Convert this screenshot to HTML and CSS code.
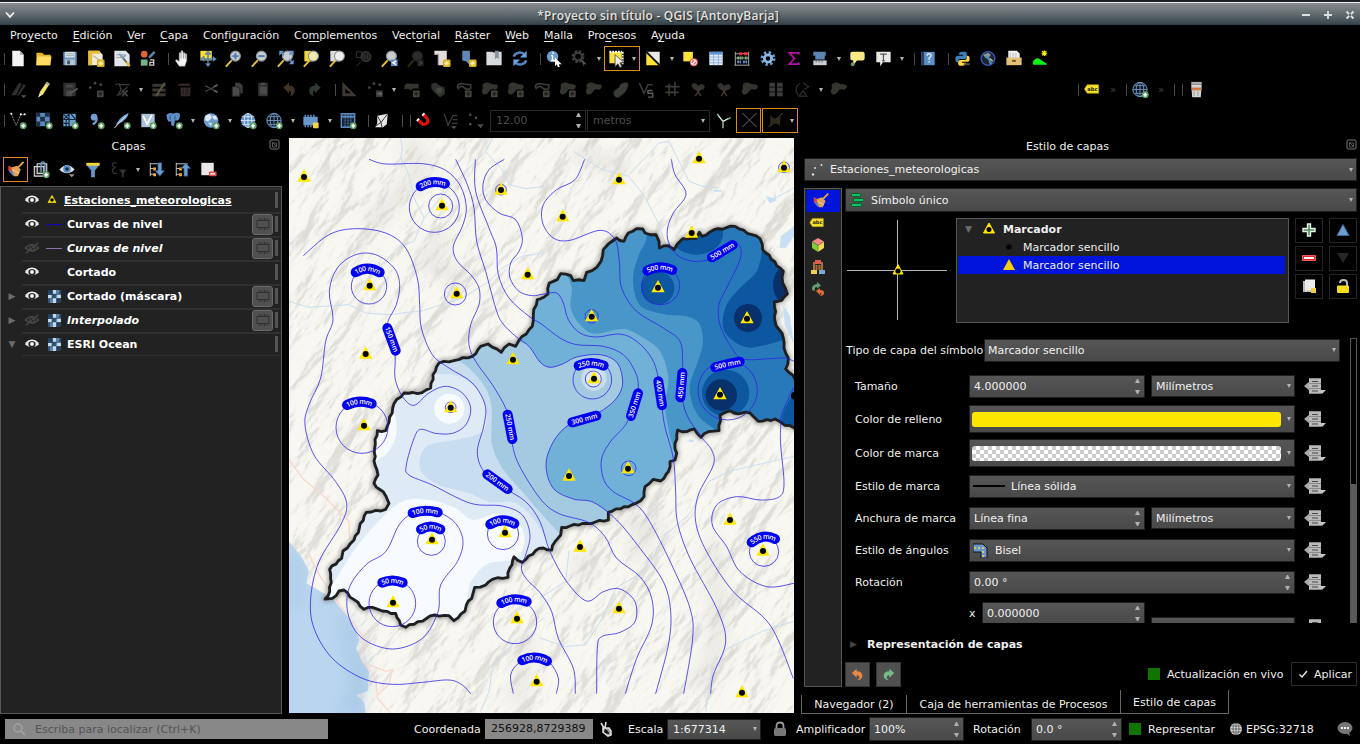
FILE: index.html
```html
<!DOCTYPE html>
<html lang="es">
<head>
<meta charset="utf-8">
<title>*Proyecto sin título - QGIS [AntonyBarja]</title>
<link rel="stylesheet" href="styles.css">
</head>
<body>
<svg class="defs" aria-hidden="true">
  <defs>
    <g id="plusbadge"><circle cx="16.500" cy="16.500" r="3.600" fill="#5b9b62"/><path d="M16.500 14.500v4M14.500 16.500h4" stroke="#fff" stroke-width="1.800"/></g>
    <g id="starbadge"><rect x="12" y="12" width="8" height="8" rx="1.500" fill="#d4af1c"/><path d="M16 13.200v5.600M13.200 16h5.600M14 14l4 4M18 14l-4 4" stroke="#fff7b8" stroke-width="1"/></g>
    <g id="glass"><path d="M3 19l5-5.500" stroke="#e8c33c" stroke-width="2" stroke-linecap="round"/><circle cx="12.500" cy="8.500" r="5.200" fill="#c9cdcf" stroke="#8d9396" stroke-width="1.200"/></g>
    <g id="blob"><path d="M3 7c2-5 7-3 9-2s6 0 7 2-2 5-4 4-4 0-5 2-5 5-7 2 2-5 0-8z" fill="#33352f"/></g>
    <g id="dimbadge"><rect x="12" y="12" width="7" height="7" rx="1" fill="#4a463c"/><path d="M15.500 13v5M13 15.500h5M13.800 13.800l3.400 3.400M17.200 13.800l-3.400 3.400" stroke="#1a1a1a" stroke-width=".800"/></g>
    <g id="globe"><circle cx="11" cy="11" r="7.500" fill="#5f8fc4"/><path d="M3.500 11h15M11 3.500v15M5 7h12M5 15h12" stroke="#dbe8f5" fill="none" stroke-width=".900"/><ellipse cx="11" cy="11" rx="4" ry="7.500" fill="none" stroke="#dbe8f5" stroke-width=".900"/></g>
  </defs>
  <symbol id="new" viewBox="0 0 22 22"><path d="M5 3h8l4 4v12H5z" fill="#f3f3f1"/><path d="M13 3v4h4z" fill="#aaa"/></symbol>
  <symbol id="open" viewBox="0 0 22 22"><path d="M3 5h6l2 2h7v11H3z" fill="#e7b52c"/><path d="M4 9h15l-2 9H3z" fill="#ffdc62"/></symbol>
  <symbol id="save" viewBox="0 0 22 22"><path d="M4 4h14v14H4z" fill="#6b95c0"/><path d="M6 4h10v6H6z" fill="#dfe3e6"/><path d="M7 6h8M7 8h8" stroke="#9aa"/><path d="M6 12h10v6H6z" fill="#b9c3cb"/><path d="M8 13h3v4H8z" fill="#40566b"/></symbol>
  <symbol id="layout" viewBox="0 0 22 22"><path d="M3 3h11l4 4v11H3z" fill="#f1ecd8"/><path d="M3 3h12v3H7v12H3z" fill="#e6bd35"/><path d="M8 8l7 5" stroke="#999"/><use href="#starbadge"/></symbol>
  <symbol id="layouts" viewBox="0 0 22 22"><path d="M3 3h12l4 4v12H3z" fill="#e4e5e6"/><path d="M5 7h8M5 10h6" stroke="#a9a9a9"/><path d="M10 8l9 11" stroke="#666" stroke-width="2"/><path d="M8 6l4 4 3-3" stroke="#8aa4bd" stroke-width="2" fill="none"/><path d="M16 15l3 4" stroke="#e3bd31" stroke-width="2.500"/></symbol>
  <symbol id="styles" viewBox="0 0 22 22"><circle cx="7" cy="6.500" r="3.500" fill="#e06436"/><path d="M12 10l6-6" stroke="#5d87b5" stroke-width="2.500"/><rect x="3.500" y="12" width="7" height="6.500" fill="#74b287"/><path d="M13 12.500h4v5.500h-4v-3h4" stroke="#ccc" stroke-width="1.400" fill="none"/></symbol>
  <symbol id="pan" viewBox="0 0 22 22"><path d="M8 19l-4-6 1-1 3 2V5h2V3h2v2h2v1h2v7l-2 6z" fill="#f4f4f4" stroke="#888" stroke-width=".500"/><path d="M10 5v6M12.500 5v6M14.500 6v5" stroke="#777" stroke-width=".700"/></symbol>
  <symbol id="pansel" viewBox="0 0 22 22"><path d="M3 3h12v10H3z" fill="#f6de3c"/><path d="M11 5v13M5 11.500h14" stroke="#4f7fb5" stroke-width="1.500"/><path d="M11 2.500l3 4H8zM11 20l3-4H8zM3 11.500l4-3v6zM20 11.500l-4-3v6z" fill="#6f9ccb" stroke="#20344b" stroke-width=".400"/></symbol>
  <symbol id="zin" viewBox="0 0 22 22"><use href="#glass"/><path d="M12.500 5.200v6.600M9.200 8.500h6.600" stroke="#4a7ab0" stroke-width="2"/></symbol>
  <symbol id="zout" viewBox="0 0 22 22"><use href="#glass"/><path d="M9.200 8.500h6.600" stroke="#4a7ab0" stroke-width="2"/></symbol>
  <symbol id="zfull" viewBox="0 0 22 22"><use href="#glass"/><path d="M5 4l4 3.500M18 4l-3.500 3M18 16l-3.500-4.500" stroke="#5f8fc4" stroke-width="1.800"/><path d="M4 3h5L4 8zM19 3h-5l5 5zM19 17v-5l-5 5z" fill="#6c99cb"/></symbol>
  <symbol id="zsel" viewBox="0 0 22 22"><path d="M3 3h9v11H3z" fill="#efd440"/><use href="#glass"/><circle cx="12.500" cy="8.500" r="4.500" fill="#efe9b0"/></symbol>
  <symbol id="zlay" viewBox="0 0 22 22"><path d="M3 3h9v11H3z" fill="#dcdcdc"/><use href="#glass"/><circle cx="12.500" cy="8.500" r="4.500" fill="#eee"/></symbol>
  <symbol id="znat" viewBox="0 0 22 22"><g fill="none" stroke="#343534"><circle cx="13" cy="9" r="5" fill="#1f201f" stroke-width="1.500"/><path d="M3 4h6v6H3zM3 19l5-5M11.500 6.500v5M14.500 6.500v5"/></g></symbol>
  <symbol id="zlast" viewBox="0 0 22 22"><use href="#glass"/><path d="M12 12h7v7h-7z" fill="#5f8fc4"/><path d="M17.500 13.500l-3.500 2 3.500 2" stroke="#fff" stroke-width="1.500" fill="none"/></symbol>
  <symbol id="znext" viewBox="0 0 22 22"><g opacity=".220"><use href="#glass"/><path d="M12 12h7v7h-7z" fill="#888"/></g><path d="M14 13.500l3.500 2-3.500 2" stroke="#555" fill="none"/></symbol>
  <symbol id="mapview" viewBox="0 0 22 22"><path d="M3 3h13v15H7V7H3z" fill="#e2ddda"/><path d="M7 6v12" stroke="#999"/><use href="#starbadge"/></symbol>
  <symbol id="bookmark" viewBox="0 0 22 22"><path d="M5 3h8v15l-4-4-4-1z" fill="#5f8ab8"/><use href="#starbadge"/></symbol>
  <symbol id="book" viewBox="0 0 22 22"><path d="M3 4h6l2 1 1-1h7v14H3z" fill="#d9dadb"/><path d="M12 3h4v9l-2-2-2 2z" fill="#8794a0"/></symbol>
  <symbol id="refresh" viewBox="0 0 22 22"><g fill="none" stroke="#4f86c0" stroke-width="2.600"><path d="M4.500 9c1-4 8-6 11.500-2M17.500 13c-1 4-8 6-11.500 2"/></g><path d="M18 3v7h-7zM4 19v-7h7z" fill="#6ca0d8"/></symbol>
  <symbol id="ident" viewBox="0 0 22 22"><circle cx="9.500" cy="9" r="6" fill="#6c9ccb"/><path d="M10 4.500v1.800M9.500 8v5M8 8h2M8 13h4" stroke="#fff" stroke-width="1.500"/><path d="M12 10l7 7-3 0 1 3-2 0-1-3-2 2z" fill="#fff"/></symbol>
  <symbol id="act" viewBox="0 0 22 22"><circle cx="9" cy="9" r="5" fill="none" stroke="#3d3d3d" stroke-width="3.500" stroke-dasharray="2.500 1.400"/><circle cx="9" cy="9" r="4" fill="none" stroke="#3d3d3d" stroke-width="2"/><path d="M12 11l6 6-3 0 0 3z" fill="#555"/></symbol>
  <symbol id="select" viewBox="0 0 22 22"><path d="M3 4h13v12H3z" fill="#f7df3e"/><path d="M3 4h13M17 4v13" stroke="#fff" stroke-dasharray="2 1" stroke-width="2"/><path d="M9 7l9 8-4 .500 2 4-2 1-2-4-3 3z" fill="#eee" stroke="#444" stroke-width=".800"/></symbol>
  <symbol id="selform" viewBox="0 0 22 22"><path d="M4 4h14v14z" fill="#e8e8e4"/><path d="M4 5v13h13z" fill="#ffe434"/><path d="M4 4l15 15" stroke="#111" stroke-width="2"/></symbol>
  <symbol id="desel" viewBox="0 0 22 22"><path d="M4 4h10v10H4z" fill="#ffe33a"/><circle cx="15" cy="15" r="4.200" fill="#eb5555"/><circle cx="15" cy="15" r="2.800" fill="none" stroke="#fff"/><path d="M13 17l4-4" stroke="#fff" stroke-width="1.400"/></symbol>
  <symbol id="table" viewBox="0 0 22 22"><path d="M4 4h14v14H4z" fill="#e5edf6"/><path d="M4 4h14v3H4z" fill="#5f95cf"/><path d="M4 9.500h14M4 12.500h14M4 15.500h14M8.500 7v11M13.500 7v11" stroke="#8fb0d6"/></symbol>
  <symbol id="abacus" viewBox="0 0 22 22"><path d="M4 4v14M18 4v14M4 6h14M4 10.500h14M3 18h16" stroke="#aaa"/><path d="M8 6h3M13 6h4" stroke="#e33" stroke-width="3"/><path d="M6 10.500h6M14 10.500h3" stroke="#7fae84" stroke-width="3" stroke-dasharray="2 .500"/><path d="M6 14.500h4M12 14.500h5" stroke="#5d8fc8" stroke-width="3" stroke-dasharray="2 .500"/></symbol>
  <symbol id="gear" viewBox="0 0 22 22"><circle cx="11" cy="11" r="6" fill="none" stroke="#6da0d6" stroke-width="3.600" stroke-dasharray="2.300 2.400"/><circle cx="11" cy="11" r="3.800" fill="none" stroke="#8ab6e4" stroke-width="3"/></symbol>
  <symbol id="sigma" viewBox="0 0 22 22"><path d="M16 7V5H6l5.500 6L6 17h10v-2" fill="none" stroke="#b313a5" stroke-width="1.800"/></symbol>
  <symbol id="ruler" viewBox="0 0 22 22"><path d="M4 4h13v4H4zM6 8h10v4H6z" fill="#5b86b4"/><path d="M4 13h14v5H4z" fill="#c8ccd0"/><path d="M7 13v2M10 13v2M13 13v2" stroke="#555"/></symbol>
  <symbol id="tip" viewBox="0 0 22 22"><path d="M6 4h11q2 0 2 2v5q0 2-2 2h-6l-4 5 0-5q-3 0-3-2V6q0-2 2-2z" fill="#f7ea86"/><circle cx="6.500" cy="17" r="2" fill="#5fa06a"/></symbol>
  <symbol id="note" viewBox="0 0 22 22"><path d="M4 4h15v11h-8l-3 4v-4H4z" fill="#e7e8ea"/><path d="M8 6.500h7M11.500 6.500v7M10 13.500h3" stroke="#555" stroke-width="1.300"/></symbol>
  <symbol id="help" viewBox="0 0 22 22"><path d="M4 4h14v14H4z" fill="#5d8fc8"/><path d="M4 4h3v14H4z" fill="#22405f"/><path d="M10 8q0-2 2.200-2t2 2q0 1.200-2 2.500v2M12.200 14v1.500" stroke="#dfeaf6" fill="none" stroke-width="1.400"/></symbol>
  <symbol id="python" viewBox="0 0 22 22"><path d="M11 4h3q2 0 2 2v4q0 1.500-2 1.500H9q-2 0-2 2V15H6q-2 0-2-4 0-3 3-3h5V7H8V6q0-2 3-2z" fill="#3d7fb7"/><path d="M11 18.500H9q-2 0-2-2v-2q0-2 2-2h5q2 0 2-2V8h1q2 0 2 3.500 0 3-3 3h-5v1h4v1q0 2-4 2z" fill="#ffd545"/><path d="M13 17h6" stroke="#555" stroke-width="2"/></symbol>
  <symbol id="earth" viewBox="0 0 22 22"><circle cx="11" cy="11" r="7.200" fill="#1a2430" stroke="#3b55b5" stroke-width="1.500"/><path d="M6 7l5-2 3 2-2 3-4 0z" fill="#8c9996"/><path d="M8 9q5 1 6 8" stroke="#4f8fb2" stroke-width="2.500" fill="none"/><path d="M13 11l3 3" stroke="#b9b58a" stroke-width="1.500"/></symbol>
  <symbol id="drawer" viewBox="0 0 22 22"><path d="M5 3h9l3 3v5H5z" fill="#f2f2f2"/><path d="M7 5v6M10 5v6M13 5v6" stroke="#b5b5b5"/><path d="M3 10h16v8H3z" fill="#e3c17a"/><path d="M9 13.500h4" stroke="#6b5420" stroke-width="2"/></symbol>
  <symbol id="hill" viewBox="0 0 22 22"><path d="M4 17v-3q4-5 8-1l6 4z" fill="#0df313" stroke="#0df313"/><path d="M12.500 5.500h6M15.500 2.500v6M13.300 3.300l4.400 4.400M17.700 3.300l-4.400 4.400" stroke="#fff400" stroke-width="1.300"/></symbol>

  <symbol id="dpens" viewBox="0 0 22 22"><path d="M4 17L12 4l3 1-6 12zM10 17l7-12 2 2-7 10z" fill="#302e2a"/><path d="M14 17h6l-3 3z" fill="#555"/></symbol>
  <symbol id="pencil" viewBox="0 0 22 22"><path d="M5 19l2-6 7-10 3 2-7 11z" fill="#f1e06a"/><path d="M14 3l3 2-1 2-3-2z" fill="#9aa"/><path d="M5 19l1.500-4 2.500 1.500z" fill="#ddd"/></symbol>
  <symbol id="dsave" viewBox="0 0 22 22"><path d="M4 4h13v14H4z" fill="#303030"/><path d="M7 6h7v3H7zM7 12h6v6H7z" fill="#4a4a4a"/><path d="M11 15l8-5" stroke="#555" stroke-width="2"/></symbol>
  <symbol id="dpts" viewBox="0 0 22 22"><circle cx="5" cy="9" r="1.500" fill="#444"/><circle cx="10" cy="4.500" r="1.500" fill="#444"/><circle cx="16" cy="6" r="1.500" fill="#444"/><use href="#dimbadge"/></symbol>
  <symbol id="dnode" viewBox="0 0 22 22"><path d="M4 6l4-1 2 6-4 7M9 6h10M8 17l9-9" stroke="#3b3a36" stroke-width="1.300" fill="none"/><path d="M11 12l6 6M17 12l-6 6" stroke="#444" stroke-width="1.800"/></symbol>
  <symbol id="dform" viewBox="0 0 22 22"><path d="M4 5h14v3H4zM4 10h14v3H4zM4 15h14v3H4z" fill="#38362f"/><path d="M8 18l9-14" stroke="#5a5642" stroke-width="2"/></symbol>
  <symbol id="dtrash" viewBox="0 0 22 22"><path d="M4 5h12v2H4zM6 9h11l-1 9H7z" fill="#392d2b"/><path d="M9 10v7M12 10v7M14 10v7" stroke="#171717"/></symbol>
  <symbol id="dcut" viewBox="0 0 22 22"><path d="M5 7l12 6M5 13l12-6" stroke="#484848" stroke-width="1.200"/><path d="M14 12l4 2M14 8l4-2" stroke="#5a5a5a" stroke-width="1.800"/></symbol>
  <symbol id="dcopy" viewBox="0 0 22 22"><path d="M9 4h5l3 3v8H9z" fill="#3c3c3c"/><path d="M6 8h5l3 2v8H6z" fill="#4b4b4b" stroke="#222"/></symbol>
  <symbol id="dpaste" viewBox="0 0 22 22"><path d="M6 4h10v14H6z" fill="#333"/><path d="M8 8h7v8H8z" fill="#4a4a4a"/><path d="M9 4h4v2H9z" fill="#555"/></symbol>
  <symbol id="dundo" viewBox="0 0 22 22"><path d="M5 9l6-5v3q6 0 6 5 0 5-5 6 2-2 1-4t-2-2v3z" fill="#3e3229"/></symbol>
  <symbol id="dredo" viewBox="0 0 22 22"><path d="M17 9l-6-5v3q-6 0-6 5 0 5 5 6-2-2-1-4t2-2v3z" fill="#303a31"/></symbol>
  <symbol id="dtri" viewBox="0 0 22 22"><path d="M4 3v15h15zM7 10v5h6z" fill="#3d3931" fill-rule="evenodd"/></symbol>
  <symbol id="dmove" viewBox="0 0 22 22"><circle cx="5" cy="9" r="1.500" fill="#444"/><circle cx="10" cy="5" r="1.500" fill="#444"/><circle cx="16" cy="6" r="1.500" fill="#444"/><path d="M12 12h7v7h-7z" fill="#3a3a3a"/><path d="M13 15.500h5M16 13.500l2 2-2 2" stroke="#777" fill="none"/></symbol>
  <symbol id="dblob1" viewBox="0 0 22 22"><path d="M3 7q2-4 6-2h9v5h-6l-2 2q-3-3-7-1z" fill="#33352f"/><use href="#dimbadge"/></symbol>
  <symbol id="dblob2" viewBox="0 0 22 22"><path d="M4 5l5-1 4 3 5 2v7l-5 3-5-4-4-5z" fill="#30332d"/><circle cx="12" cy="12" r="3" fill="#454840"/></symbol>
  <symbol id="dring" viewBox="0 0 22 22"><path d="M4 8q1-4 6-3t8 1v4q-4 2-7-1t-6 1z" fill="none" stroke="#3a3b35" stroke-width="1.700"/><use href="#dimbadge"/></symbol>
  <symbol id="dblob3" viewBox="0 0 22 22"><use href="#blob"/><use href="#dimbadge"/></symbol>
  <symbol id="dblob4" viewBox="0 0 22 22"><use href="#blob"/></symbol>
  <symbol id="dbean" viewBox="0 0 22 22"><path d="M5 17q-2-4 2-6t4-4 5-3 3 4-3 6-5 4-6-1z" fill="#3a3d36" stroke="#2a2c27"/></symbol>
  <symbol id="dvs" viewBox="0 0 22 22"><path d="M4 4l5 11 4-9h5" fill="none" stroke="#3b3b3b" stroke-width="1.600"/><path d="M18 12h-5v3h5v4h-5" fill="none" stroke="#5a5a5a" stroke-width="1.500"/></symbol>
  <symbol id="dgrid" viewBox="0 0 22 22"><path d="M8 5v13M14 3v15M4 8h15M4 14h14" stroke="#3c3c36" stroke-width="1.600"/></symbol>
  <symbol id="dsciss" viewBox="0 0 22 22"><path d="M4 6q4-4 7 1 6-4 7 1 0 4-7 4-6 0-7-6z" fill="#30322d"/><path d="M8 8l6 10M14 9L8 18" stroke="#453a38" stroke-width="1.500"/></symbol>
  <symbol id="dsquares" viewBox="0 0 22 22"><path d="M4 4h6v4H4zM12 4h6v4h-6zM4 9h6v4H4zM12 9h6v4h-6zM4 14h6v4H4zM12 14h6v4h-6z" fill="#3c3c3c"/></symbol>
  <symbol id="drot" viewBox="0 0 22 22"><path d="M9 5q-5 2-4 8l2 4M12 4l6 4-5 3M8 18l4-6 4 6z" fill="none" stroke="#303030" stroke-width="1.200"/></symbol>

  <symbol id="vadd" viewBox="0 0 22 22"><path d="M4 4l5 12 5-11h4" fill="none" stroke="#8d949a" stroke-width="1" stroke-dasharray="2 1"/><circle cx="4" cy="4" r="1.100" fill="#fff"/><circle cx="14" cy="4.500" r="1.100" fill="#fff"/><circle cx="18" cy="4.500" r="1.100" fill="#fff"/><use href="#plusbadge"/></symbol>
  <symbol id="radd" viewBox="0 0 22 22"><path d="M3 3h14v14H3z" fill="#5c89ba"/><path d="M3 3h4v4H3zM12 3h5v4h-5zM7 7h5v5H7zM3 12h4v5H3zM12 12h5v5h-5z" fill="#1c3048"/><use href="#plusbadge"/></symbol>
  <symbol id="madd" viewBox="0 0 22 22"><path d="M4 4h13v13H4z" fill="#6e9fd0"/><path d="M4 4l6 6M10 4l-6 6M12 4l5 6M10 17V4M4 10h13M4 14h6M7 10v7" stroke="#14263a" stroke-width="1.200"/><use href="#plusbadge"/></symbol>
  <symbol id="comma" viewBox="0 0 22 22"><circle cx="9" cy="7.500" r="3.500" fill="#6f9fd4"/><path d="M11.500 8q1 5-4 7" stroke="#6f9fd4" stroke-width="2.200" fill="none"/><use href="#plusbadge"/></symbol>
  <symbol id="feather" viewBox="0 0 22 22"><path d="M4 18q2-9 14-15-1 8-12 12z" fill="#78a5d4"/><path d="M3 19l12-13" stroke="#dfeaf5"/><use href="#plusbadge"/></symbol>
  <symbol id="vlay" viewBox="0 0 22 22"><path d="M4 4h14v14H4z" fill="#a9c3dd"/><path d="M6 6l4 9 5-10" stroke="#fff" stroke-width="1.800" fill="none"/><use href="#plusbadge"/></symbol>
  <symbol id="eleph" viewBox="0 0 22 22"><path d="M3 5q4-3 7-1 4-2 7 0 1 4-2 7H12l-1 6-3-1V12H5Q3 9 3 5z" fill="#5e8fc6"/><path d="M7 6v4M12 6v4" stroke="#2c4c70"/><use href="#plusbadge"/></symbol>
  <symbol id="wms" viewBox="0 0 22 22"><circle cx="11" cy="11" r="7.600" fill="#6c9bd0"/><path d="M5 6l5-2 2 4-4 4-3-1zM12 6l4 0 2 4-4 0zM8 13l4 1-1 3z" fill="#dfe9f3"/><use href="#plusbadge"/></symbol>
  <symbol id="wcs" viewBox="0 0 22 22"><use href="#globe"/><use href="#plusbadge"/></symbol>
  <symbol id="wfs" viewBox="0 0 22 22"><circle cx="11" cy="11" r="7.500" fill="#10151c" stroke="#6f9bc9"/><path d="M3.500 11h15M11 3.500v15M5 7h12M5 15h12" stroke="#6f9bc9" fill="none" stroke-width=".900"/><ellipse cx="11" cy="11" rx="4" ry="7.500" fill="none" stroke="#6f9bc9"/><use href="#plusbadge"/></symbol>
  <symbol id="chip" viewBox="0 0 22 22"><path d="M3 7h15v9H3z" fill="#6999cb"/><path d="M5 5v2M8 5v2M11 5v2M14 5v2M5 16v2M8 16v2M11 16v2" stroke="#6999cb" stroke-width="1.500"/><rect x="13" y="13" width="6" height="6" rx="1" fill="#f4d04c"/></symbol>
  <symbol id="tbadd" viewBox="0 0 22 22"><path d="M4 4h14v14H4z" fill="#16273a" stroke="#5d8bbd" stroke-width="1.500"/><path d="M4 7h14" stroke="#5d8bbd" stroke-width="2"/><path d="M8 4v14M11 4v14M14 4v14" stroke="#5d8bbd" stroke-dasharray="2 1"/><use href="#plusbadge"/></symbol>
  <symbol id="cube" viewBox="0 0 22 22"><path d="M6 6l11-2-1 11-4 3-8 0 2-4z" fill="#e8e8e8"/><path d="M6 6l4 7 7-9M4 17l6-4 1 5" stroke="#333" fill="none"/></symbol>
  <symbol id="magnet" viewBox="0 0 22 22"><g transform="rotate(-45 11 11)"><path d="M7 6v5a4 4 0 0 0 8 0V6" fill="none" stroke="#e00f0f" stroke-width="3.400"/><path d="M5.300 5h3.400v2H5.300zM13.300 5h3.400v2h-3.400z" fill="#f2f2f2"/></g></symbol>
  <symbol id="dv" viewBox="0 0 22 22"><path d="M5 4l4 12 5-10h5M14 10h5M13 14h6" fill="none" stroke="#3d3d3d" stroke-width="1.300"/><path d="M12 17h6l-3 3z" fill="#555"/></symbol>
  <symbol id="ddots" viewBox="0 0 22 22"><circle cx="5" cy="5" r="1.300" fill="#555"/><circle cx="11" cy="8" r="1.300" fill="#555"/><circle cx="5" cy="15" r="1.300" fill="#555"/><path d="M12 15h7l-3 4z" fill="#4a4a4a"/></symbol>
  <symbol id="topo" viewBox="0 0 22 22"><path d="M5 4l6 8v7M11 12l8-4" fill="none" stroke="#8cc79a" stroke-width="1.500"/><path d="M6 6l5 6 5-3" stroke="#eee" fill="none"/></symbol>
  <symbol id="cross" viewBox="0 0 22 22"><path d="M4 3l15 15M19 3L4 18" stroke="#4a4a4a" stroke-width="1.100"/></symbol>
  <symbol id="tracing" viewBox="0 0 22 22"><path d="M4 18L19 3" stroke="#555"/><path d="M6 5l3 3q3 2 6-1l2-2-1 12-2-2q-3-2-6 1l-2 2z" fill="#2f2a1c"/></symbol>
  <symbol id="abc" viewBox="0 0 22 22"><path d="M6 6h12v9H6l-3-4.500z" fill="#f5e02c" stroke="#b29a10" stroke-width=".600"/><text x="6" y="12.600" class="abc">abc</text></symbol>
  <symbol id="tidy" viewBox="0 0 22 22"><path d="M6 3h11v3H6z" fill="#aaa"/><path d="M6 6h11l-1 13H7z" fill="#d8d4d2"/><path d="M6 9h11l-.500 3H7z" fill="#b98b6b"/><path d="M7 10h8" stroke="#e0702a" stroke-width="1.300"/><path d="M9 13v5M13 13v5" stroke="#999"/></symbol>

  <symbol id="brush" viewBox="0 0 22 22"><path d="M3 7l3 1 3 6-2 2-4-4z" fill="#d8433b"/><path d="M3 12l4 5 3 1-1-5z" fill="#5b7fc4"/><path d="M6 9l6-2 4 4-3 7-4 0z" fill="#dfa155"/><path d="M13 9l6-6" stroke="#e8a33c" stroke-width="2"/><path d="M7 11l7 4" stroke="#f8d9a0"/></symbol>
  <symbol id="group" viewBox="0 0 22 22"><path d="M4 8h10v10H4zM7 5h10v10H7z" fill="#222" stroke="#d5d5d5" stroke-width="1.200"/><path d="M11 14V5q0-2 2-2t2 2v8" fill="none" stroke="#6f9bc9" stroke-width="1.500"/><use href="#plusbadge"/></symbol>
  <symbol id="eyeblue" viewBox="0 0 22 22"><path d="M3 11q8-9 16 0-8 8-16 0z" fill="#dfe3e6"/><circle cx="11" cy="10.500" r="4" fill="#5c8fc8"/><circle cx="11" cy="10.500" r="1.800" fill="#12263c"/><path d="M13 16h6l-3 3z" fill="#999"/></symbol>
  <symbol id="filter" viewBox="0 0 22 22"><path d="M4 6h14l-5 6v7h-4v-7z" fill="#6796c7"/><path d="M4 4h14v3H4z" fill="#f2d83c"/></symbol>
  <symbol id="deps" viewBox="0 0 22 22"><path d="M9 4H5L4 7l3 2-3 2 1 4h4" fill="none" stroke="#303030" stroke-width="1.400"/><path d="M11 11h8l-3 4v4h-2v-4z" fill="#333"/></symbol>
  <symbol id="expand" viewBox="0 0 22 22"><path d="M5 4v14M5 5h12M5 10h5M5 16h5" stroke="#c9c9c9" fill="none"/><path d="M8 9h3v3H8zM8 15h3v3H8z" fill="#f4a52a"/><path d="M13 4h4v8h3l-5 6-5-6h3z" fill="#6b9ccf" stroke="#25486e" stroke-width=".600"/></symbol>
  <symbol id="collapse" viewBox="0 0 22 22"><path d="M5 4v14M5 5h12M5 10h5M5 16h5" stroke="#c9c9c9" fill="none"/><path d="M8 9h3v3H8zM8 15h3v3H8z" fill="#f4a52a"/><path d="M13 18h4v-8h3l-5-6-5 6h3z" fill="#6b9ccf" stroke="#25486e" stroke-width=".600"/></symbol>
  <symbol id="remove" viewBox="0 0 22 22"><path d="M4 4h13v13H4z" fill="#e9e9e7"/><rect x="12" y="13" width="8" height="5" rx="1" fill="#e64545"/><path d="M13.500 15.500h5" stroke="#fff" stroke-width="1.500"/></symbol>
  <symbol id="eye" viewBox="0 0 16 12"><path d="M1 6.500Q8-2 15 6.500 8 12 1 6.500z" fill="#eee"/><circle cx="8" cy="6" r="3.600" fill="#222"/><circle cx="8" cy="6" r="2" fill="#eee"/><path d="M1.500 5.500Q8-1 14.500 5.500" stroke="#eee" stroke-width="1.200" fill="none"/></symbol>
  <symbol id="eyeoff" viewBox="0 0 16 12"><path d="M1.500 6Q8-1 14.500 6 8 12 1.500 6z" fill="none" stroke="#4c4c4c" stroke-width="1.200"/><circle cx="8" cy="6" r="2.500" fill="none" stroke="#4c4c4c"/><path d="M2 11L14 1" stroke="#4c4c4c" stroke-width="1.300"/></symbol>
  <symbol id="mem" viewBox="0 0 16 14"><rect x="2" y="3.500" width="12" height="7" fill="none" stroke="#303030"/><path d="M4.500 1v3M7 1v3M9.500 1v3M12 1v3M4.500 10v3M7 10v3M9.500 10v3M12 10v3" stroke="#303030"/></symbol>
  <symbol id="raster" viewBox="0 0 14 14"><path d="M0 0h14v14H0z" fill="#30506f"/><path d="M5 0h4v4H5zM0 5h4v4H0zM9 5h5v4H9zM5 9h4v5H5z" fill="#c3d9ef"/><path d="M0 0h5v5H0zM9 9h5v5H9z" fill="#273f59"/><path d="M9 0h3v4H9zM2 10h3v4H2z" fill="#6183a8"/><path d="M5 4.500h4v4H5z" fill="#31506f"/></symbol>
  <symbol id="tri" viewBox="0 0 14 14"><path d="M7 2l5.500 10h-11z" fill="#ffe800" stroke="#ffe800" stroke-linejoin="round"/><circle cx="7" cy="8.500" r="2.500" fill="#000"/></symbol>
  <symbol id="float" viewBox="0 0 12 12"><rect x="1" y="1" width="9" height="9" rx="2" fill="none" stroke="#4d4d4d" stroke-width="1.500"/><path d="M3.500 8V4h4v4zM3 3l5 5" fill="none" stroke="#555"/></symbol>
  <symbol id="ovr" viewBox="0 0 24 18"><path d="M0 9l6-5v10z" fill="#a9a9a9"/><path d="M5 1h12v16H5z" fill="#b9b9b9"/><path d="M5 1.500h12M5 6.500h12M5 11.500h12M5 16.500h12" stroke="#8a8a8a"/><path d="M8 4.500h6M8 9h6M8 14h6" stroke="#4a4a4a" stroke-width="1.200"/><path d="M14 13h8l-4 4z" fill="#c4c4c4"/></symbol>
  <symbol id="cube3" viewBox="0 0 16 16"><path d="M8 1l6 3.500-6 4-6-4z" fill="#f28b86"/><path d="M2 4.500l6 4V15l-6-4z" fill="#79d336"/><path d="M14 4.500l-6 4V15l6-4z" fill="#efdc4a"/><path d="M2 4.500l6 4 6-4M8 8.500V15" stroke="#555" stroke-width=".500" fill="none"/></symbol>
  <symbol id="diag" viewBox="0 0 16 16"><path d="M4 11V4h8v7M6.500 11V6M9.500 11V6" stroke="#a8713b" stroke-width="2" fill="none"/><path d="M5 1h6v4H5z" fill="#e25b50"/><path d="M1 11h6v4H1z" fill="#f2cd4a"/><path d="M9 11h6v4H9z" fill="#78a9dc"/></symbol>
  <symbol id="hist" viewBox="0 0 16 16"><path d="M2 9q-1-5 5-6V1l4 3.500-4 3V6Q4 6 5 10z" fill="#679b72"/><path d="M6 10l4-3v2q5 0 4 4-2 3-5 1 3 0 2-2l-1 0v2z" fill="#e06d35"/></symbol>
  <symbol id="undo" viewBox="0 0 16 16"><path d="M1 6l6-5v3q7 0 7 6-1 5-7 5 4-2 3-5-1-1-3-1v3z" fill="#e88745"/></symbol>
  <symbol id="redo" viewBox="0 0 16 16"><path d="M15 6L9 1v3Q2 4 2 10q1 5 7 5-4-2-3-5 1-1 3-1v3z" fill="#79b887"/></symbol>
</svg>

<header class="title"><svg class="tmenu" viewBox="0 0 10 8"><path d="M1 1.500L5 6l4-4.500" stroke="#eee" stroke-width="1.800" fill="#777"/></svg><h1>*Proyecto sin título - QGIS [AntonyBarja]</h1>
<svg class="wbtns" viewBox="0 0 54 12"><path d="M1 6h8M23 6h8M27 2v8" stroke="#dedede" stroke-width="1.800"/><path d="M45.500 2.500l7 7M52.500 2.500l-7 7" stroke="#dedede" stroke-width="2"/><circle cx="49" cy="6" r="1.400" fill="#667"/></svg></header>
<nav class="menu"><span>Pro<u>y</u>ecto</span><span><u>E</u>dición</span><span><u>V</u>er</span><span><u>C</u>apa</span><span>Con<u>f</u>iguración</span><span>Co<u>m</u>plementos</span><span>Vect<u>o</u>rial</span><span><u>R</u>áster</span><span><u>W</u>eb</span><span><u>M</u>alla</span><span>Pro<u>c</u>esos</span><span>A<u>y</u>uda</span></nav>
<div class="bar" data-icons="| new open save layout layouts styles / pan pansel zin zout zfull zsel zlay znat zlast znext mapview bookmark book refresh / ident act v [select] selform v desel table abacus gear sigma ruler v tip note v / help / python earth drawer hill"></div>
<div class="bar"><div class="grp" data-icons="| dpens pencil dsave dpts dnode v dform dtrash dcut dcopy dpaste dundo dredo / dtri dmove v dblob1 dblob2 dring dblob3 dblob3 dring dblob3 dblob4 dbean dvs dgrid dsciss dsciss dblob4 dsquares drot v dblob4"></div><div class="grp far" data-icons="/ abc > / wfs > / / tidy"></div></div>
<div class="bar"><div class="grp" data-icons="| vadd radd madd comma feather vlay eleph v wms v wcs wfs v chip v tbadd / cube / / magnet dv ddots"></div><div class="dimspin">12.00<i class="sp"></i></div><div class="dimcombo">metros<i class="dn"></i></div><div class="grp" data-icons="topo"></div><div class="obox"><svg class="ic"><use href="#cross"/></svg></div><div class="obox wide"><svg class="ic"><use href="#tracing"/></svg><i class="dn"></i></div></div>

<main>
<aside class="layers">
  <div class="dockt"><span>Capas</span><svg class="flt"><use href="#float"/></svg></div>
  <div class="ltools"><div class="obox"><svg class="ic"><use href="#brush"/></svg></div><div class="grp" data-icons="group eyeblue filter deps v expand collapse remove"></div></div>
  <div class="tree">
    <div class="row"><b class="ex"></b><svg class="eye"><use href="#eye"/></svg><svg class="sy"><use href="#tri"/></svg><span class="nm sel">Estaciones_meteorologicas</span><i class="bar2"></i></div>
    <div class="row"><b class="ex"></b><svg class="eye"><use href="#eye"/></svg><i class="ln"></i><span class="nm">Curvas de nivel</span><span class="chipb"><svg><use href="#mem"/></svg></span><i class="bar2"></i></div>
    <div class="row"><b class="ex"></b><svg class="eye"><use href="#eyeoff"/></svg><i class="ln mauve"></i><span class="nm it">Curvas de nivel</span><span class="chipb"><svg><use href="#mem"/></svg></span><i class="bar2"></i></div>
    <div class="row"><b class="ex"></b><svg class="eye"><use href="#eye"/></svg><i class="blank"></i><span class="nm">Cortado</span><i class="bar2"></i></div>
    <div class="row"><b class="ex">▶</b><svg class="eye"><use href="#eye"/></svg><svg class="sy ra"><use href="#raster"/></svg><span class="nm">Cortado (máscara)</span><span class="chipb"><svg><use href="#mem"/></svg></span><i class="bar2"></i></div>
    <div class="row"><b class="ex">▶</b><svg class="eye"><use href="#eyeoff"/></svg><svg class="sy ra"><use href="#raster"/></svg><span class="nm it">Interpolado</span><span class="chipb"><svg><use href="#mem"/></svg></span><i class="bar2"></i></div>
    <div class="row last"><b class="ex">▼</b><svg class="eye"><use href="#eye"/></svg><svg class="sy ra"><use href="#raster"/></svg><span class="nm">ESRI Ocean</span><i class="bar2"></i></div>
  </div>
</aside>

<svg class="map" viewBox="0 0 1515 1725" preserveAspectRatio="none">
  <defs>
    <filter id="relief" x="0" y="0" width="100%" height="100%" color-interpolation-filters="sRGB">
      <feTurbulence type="fractalNoise" baseFrequency=".0045 .011" numOctaves="5" seed="23"/>
      <feDiffuseLighting surfaceScale="34" diffuseConstant="1.150" lighting-color="#fff"><feDistantLight azimuth="250" elevation="52"/></feDiffuseLighting>
      <feComponentTransfer><feFuncR type="table" tableValues=".84 .865 .89 .955 .98"/><feFuncG type="table" tableValues=".835 .86 .885 .952 .975"/><feFuncB type="table" tableValues=".815 .84 .865 .932 .952"/></feComponentTransfer>
    </filter>
    <filter id="soft"><feGaussianBlur stdDeviation="22"/></filter>
    <filter id="shadow" x="-5%" y="-5%" width="110%" height="110%"><feGaussianBlur stdDeviation="6"/></filter>
    <clipPath id="basin"><path id="basinpath"/></clipPath>
  </defs>
  <rect width="1515" height="1725" fill="#f5f4f0"/>
  <g transform="rotate(-52 757 862)" opacity=".850"><rect x="-500" y="-350" width="2500" height="2450" filter="url(#relief)"/></g>
  <g filter="url(#soft)" fill="none" stroke="#cfcec8" stroke-opacity=".300" stroke-width="60">
    <path d="M350 0L420 110M850 40l170 60M470 280l-60 90 130 60M240 260l160-160M1000 1140l90 20-60 110M1270 1200l20 300-60 150M720 1500l-40 200M1250 940l50 40M890 1240l-20 90"/>
  </g>
  <path d="M0 1211L40 1261 60 1300 52 1336 130 1381 180 1441 212 1505 200 1531 240 1601 236 1660 200 1671 225 1691 230 1725H0z" fill="#b9d5ef"/>
  <path d="M0 1240L30 1290 20 1370 60 1395 0 1400zM150 1420L180 1441 212 1505 200 1531 240 1601 236 1660 200 1671 225 1691 230 1725H150L190 1640z" fill="#9cc0df" opacity=".550" filter="url(#soft)"/>
  <g fill="none" stroke="#cadef0" stroke-width="3">
    <path d="M335 0L340 30 335 60 360 110 375 180 405 240 375 310 330 325 290 370 250 400 220 450 180 500 230 525 300 530 400 518 520 480 600 430 640 390 700 355 765 344M0 490L60 508 180 500M405 240L480 150 550 80 590 42 640 95 660 140 710 152 765 145M590 42L610 0M853 40L940 95 1020 115 1070 180 1110 260 1130 320M1020 110L1110 15 1140 10 1200 130 1240 145 1290 150M1440 190L1515 150"/>
    <path d="M575 1720L600 1660 612 1580 680 1510 730 1465 765 1440M753 1380L830 1330 840 1240M753 1500L830 1526 890 1520 940 1440 980 1350 1050 1310 1090 1260 1130 1190 1200 1130 1260 1030 1320 1000 1515 955M1250 1720L1270 1600 1310 1535 1420 1480 1515 1450"/>
  </g>
  <path d="M1430 175l25 5 3-20 4 28-20 8M1275 155h22v6h-22zM1475 295l40-30v30l-25 35h-18M1482 500l20 30 13 90-28-60M1200 905h14v8h-14z" fill="#c9dff3"/>
  <path d="M0 965L40 1020 110 1080 180 1150 182 1205M60 1250L90 1310 130 1370 185 1445 225 1500 215 1560 260 1620 265 1680 305 1725M240 1580L290 1600 310 1595 300 1640 265 1670" fill="none" stroke="#f9d8cc" stroke-width="4"/>
  <path id="basinshadow" fill="none" stroke="#777" stroke-width="18" stroke-linejoin="round" opacity=".600" filter="url(#shadow)"/>
  <g clip-path="url(#basin)" id="bands"></g>
  <path id="basinline" fill="none" stroke="#1d1f21" stroke-width="8.500" stroke-linejoin="round"/>
  <g id="contours" fill="none" stroke="#2a20e6" stroke-opacity=".850" stroke-width="2.700"></g>
  <g id="labels"></g>
  <g id="stations"></g>
</svg>

<section class="style">
  <div class="dockt"><span>Estilo de capas</span><svg class="flt"><use href="#float"/></svg></div>
  <div class="combo big"><svg class="pts" viewBox="0 0 14 14"><circle cx="2" cy="11.500" r="1.200" fill="#ddd"/><circle cx="4" cy="5" r="1" fill="#ddd"/><circle cx="10.500" cy="2" r="1" fill="#ddd"/></svg>Estaciones_meteorologicas<i class="dn"></i></div>
  <div class="cols">
    <div class="side"><div class="s on"><svg><use href="#brush"/></svg></div><div class="s lab"><svg><use href="#abc"/></svg></div><div class="s"><svg><use href="#cube3"/></svg></div><div class="s"><svg><use href="#diag"/></svg></div><div class="s"><svg><use href="#hist"/></svg></div></div>
    <div class="main">
      <div class="combo big2"><svg class="sim" viewBox="0 0 14 14"><g fill="#0ec45f" stroke="#075b2d"><rect x=".500" y=".500" width="9" height="3" rx="1"/><rect x="2.500" y="5.500" width="10" height="3" rx="1"/><rect x=".500" y="10.500" width="10" height="3" rx="1"/></g></svg>Símbolo único<i class="dn"></i></div>
      <div class="top">
        <svg class="prev" viewBox="0 0 104 104"><path d="M52.500 2v100M2 52.500h100" stroke="#b8b8b8"/><path d="M53 46.500l5 9.500h-10z" fill="#ffe800" stroke="#ffe800"/><circle cx="53" cy="53" r="2.600"/></svg>
        <div class="symtree">
          <div class="st"><b class="ex">▼</b><svg class="tr1"><use href="#tri"/></svg><strong>Marcador</strong></div>
          <div class="st sub"><svg viewBox="0 0 14 14"><circle cx="7" cy="7" r="2.800" fill="#050505"/></svg>Marcador sencillo</div>
          <div class="st sub act"><svg viewBox="0 0 14 14"><path d="M7 1l6 11H1z" fill="#f7ce0e"/></svg>Marcador sencillo</div>
        </div>
        <div class="btns">
          <span><svg viewBox="0 0 16 16"><path d="M6.500 2h3v4.500H14v3H9.500V14h-3V9.500H2v-3h4.500z" fill="#4b9152" stroke="#e6efe7" stroke-width="1.400"/></svg></span><span><svg viewBox="0 0 16 16"><path d="M8 2.500l6 11H2z" fill="#6d9ed3" stroke="#3d6895"/></svg></span>
          <span><svg viewBox="0 0 16 16"><path d="M1.500 5.500h13v5h-13z" fill="#e02828" stroke="#ee5a5a"/><path d="M3 8h10" stroke="#fff" stroke-width="2"/></svg></span><span><svg viewBox="0 0 16 16"><path d="M2 3h12L8 13z" fill="#262626"/></svg></span>
          <span><svg viewBox="0 0 16 16"><path d="M2 3h11v11H2z" fill="#bcbcbc"/><path d="M4 1.500h10v11H4z" fill="#ececea"/><path d="M10 10h5v5h-5z" fill="#f0cd46"/></svg></span><span><svg viewBox="0 0 16 16"><path d="M5 5q0-3 3.500-3t3.500 3v3" fill="none" stroke="#bbb" stroke-width="2"/><rect x="2" y="7.500" width="12" height="7.500" rx="1" fill="#f3dd1d"/></svg></span>
        </div>
      </div>
      <div class="scroll">
        <div class="form">
          <div class="fr type"><label>Tipo de capa del símbolo</label><div class="combo grow">Marcador sencillo<i class="dn"></i></div></div>
          <div class="fr m12"><label>Tamaño</label><div class="spin v">4.000000<i class="sp"></i></div><div class="combo unit">Milímetros<i class="dn"></i></div><svg class="ovr"><use href="#ovr"/></svg></div>
          <div class="fr tall m7"><label>Color de relleno</label><div class="combo wide"><i class="sw yellow"></i><i class="dn"></i></div><svg class="ovr"><use href="#ovr"/></svg></div>
          <div class="fr tall m6"><label>Color de marca</label><div class="combo wide"><i class="sw check"></i><i class="dn"></i></div><svg class="ovr"><use href="#ovr"/></svg></div>
          <div class="fr m7"><label>Estilo de marca</label><div class="combo wide"><i class="solid"></i>Línea sólida<i class="dn"></i></div><svg class="ovr"><use href="#ovr"/></svg></div>
          <div class="fr m8"><label>Anchura de marca</label><div class="spin v">Línea fina<i class="sp"></i></div><div class="combo unit">Milímetros<i class="dn"></i></div><svg class="ovr"><use href="#ovr"/></svg></div>
          <div class="fr m8"><label>Estilo de ángulos</label><div class="combo wide"><svg class="bis" viewBox="0 0 15 15"><path d="M0 1h10l4 4v10H8V9H0z" fill="#6b95cc" stroke="#111" stroke-width="1"/><path d="M1 5h9v9" fill="none" stroke="#f2dd2f" stroke-width="1.600" stroke-dasharray="2 2"/></svg>Bisel<i class="dn"></i></div><svg class="ovr"><use href="#ovr"/></svg></div>
          <div class="fr m8"><label>Rotación</label><div class="spin wide">0.00 °<i class="sp"></i></div><svg class="ovr"><use href="#ovr"/></svg></div>
          <div class="fr m7"><label></label><em>x</em><div class="spin vx">0.000000<i class="sp"></i></div><div class="combo unit low">Milímetros<i class="dn"></i></div><svg class="ovr lowi"><use href="#ovr"/></svg></div>
        </div>
        <div class="sbar"><i></i></div>
      </div>
      <div class="rep"><b class="ex">▶</b><strong>Representación de capas</strong></div>
      <div class="acts"><span class="ab"><svg><use href="#undo"/></svg></span><span class="ab"><svg><use href="#redo"/></svg></span><i class="green"></i><span class="lv">Actualización en vivo</span><button><svg viewBox="0 0 10 10"><path d="M1.500 5.500L4 8l5-6" fill="none" stroke="#e8e8e8" stroke-width="1.400"/></svg>Aplicar</button></div>
    </div>
  </div>
  <div class="tabs"><span class="t1">Navegador (2)</span><span class="t2">Caja de herramientas de Procesos</span><span class="t3">Estilo de capas</span></div>
</section>
</main>

<footer>
  <div class="search"><svg viewBox="0 0 14 14"><circle cx="6" cy="6" r="4" fill="none" stroke="#a2a2a2" stroke-width="1.300"/><path d="M9 9l4 4" stroke="#a2a2a2" stroke-width="1.500"/></svg>Escriba para localizar (Ctrl+K)</div>
  <span class="f1">Coordenada</span><div class="coord">256928,8729389</div>
  <svg class="cur" viewBox="0 0 16 16"><path d="M3 2l3 5M8 1l-1 6M5 7l6 0 2 3v4l-3 1-5-4z" fill="#999" stroke="#ddd" stroke-width="1.600"/><path d="M7 8l3 2-1 3-3-2z" fill="#111"/><circle cx="10" cy="12" r="1" fill="#111"/></svg>
  <span class="f2">Escala</span><div class="combo sc">1:677314<i class="dn"></i></div>
  <svg class="lock" viewBox="0 0 14 16"><path d="M3.500 8V5q0-3.500 3.500-3.500T10.500 5v3" fill="none" stroke="#999" stroke-width="1.800"/><rect x="1" y="7" width="12" height="8" rx="1.500" fill="#777"/></svg>
  <span class="f3">Amplificador</span><div class="spin am">100%<i class="sp"></i></div>
  <span class="f4">Rotación</span><div class="spin ro">0.0 °<i class="sp"></i></div>
  <i class="green"></i><span class="f5">Representar</span>
  <svg class="gl" viewBox="0 0 14 14"><circle cx="7" cy="7" r="6" fill="#d9d9d9"/><path d="M1 7h12M7 1v12M2 4h10M2 10h10" stroke="#444" stroke-width=".700"/><ellipse cx="7" cy="7" rx="3" ry="6" fill="none" stroke="#444" stroke-width=".700"/></svg>
  <span class="f6">EPSG:32718</span>
  <svg class="bub" viewBox="0 0 16 16"><ellipse cx="8" cy="7" rx="7.500" ry="6" fill="#777"/><path d="M9 12l4 3-1-5z" fill="#777"/><path d="M4 7h2M7 7h2M10 7h2" stroke="#eee" stroke-width="1.800"/></svg>
</footer>
<script src="app.js"></script>
</body>
</html>
```

FILE: styles.css
```css
* { box-sizing: border-box; }
body { margin: 0; width: 1360px; height: 744px; overflow: hidden; background: #000; color: #eee; font: 11px "DejaVu Sans", sans-serif; white-space: nowrap; }
.defs { position: absolute; width: 0; height: 0; }
i, em { font-style: normal; }
.abc { font: bold 5.500px "DejaVu Sans", sans-serif; fill: #222; }
.title { display: flex; align-items: center; justify-content: space-between; height: 25px; padding: 5px 5px 0 5px; background: linear-gradient(#1a2027 0 2px, #f2f2f2 2px 3px, #868d90 3px, #5e686d 60%, #344148); }
.title h1 { margin: 0; font: 600 12px "Open Sans", sans-serif; letter-spacing: .2px; color: #e2e2e0; text-shadow: 1px 1px 1px #222; }
.tmenu { width: 10px; height: 8px; margin-right: 44px; }
.tmenu + h1 { margin-right: 44px; }
.wbtns { width: 54px; height: 12px; }
.menu { display: flex; height: 19px; gap: 14.800px; padding: 0 10px; line-height: 21px; }
.menu u { text-underline-offset: 2px; }
.bar, .grp { display: flex; align-items: center; }
.bar { height: 31px; padding-bottom: 2px; }
.grp { height: 29px; }
.ic { width: 26px; height: 21px; flex: none; }
.gr { width: 8px; height: 12px; border-right: 1.500px solid #4a4a4a; flex: none; }
.gr.first { width: 5px; }
.dn { width: 0; height: 0; border: 2.500px solid transparent; border-top: 4px solid #b5b5b5; border-bottom: 0; flex: none; }
.arr { width: 11px; display: flex; justify-content: center; flex: none; }
.more { width: 14px; color: #444; font-size: 10px; text-align: center; }
.obox { display: flex; align-items: center; justify-content: center; width: 25px; height: 25px; border: 1px solid #e08a1e; flex: none; margin-right: 1px; }
.obox.wide { width: 36px; justify-content: flex-start; margin: 0; }
.obox .ic { margin: 0 -1px; }
.obox.wide .dn { margin-left: 3px; }
.far { margin-left: 219px; }
.far .more { margin: 0 -1px 0 1px; }
.dimspin, .dimcombo { display: flex; align-items: center; justify-content: space-between; height: 22px; border: 1px solid #282828; color: #4b4b4b; padding-left: 5px; }
.dimspin { width: 96px; margin-left: 1px; padding-right: 4px; }
.dimcombo { width: 123px; margin: 0 0 0 1px; padding-right: 4px; }
.sp { width: 5px; height: 15px; flex: none; display: flex; flex-direction: column; justify-content: space-between; }
.sp::before, .sp::after { content: ""; border: 2.500px solid transparent; }
.sp::before { border-bottom: 4px solid #b0b0b0; border-top: 0; }
.sp::after { border-top: 4px solid #b0b0b0; border-bottom: 0; }
main { display: flex; height: 577px; }
.layers { width: 283px; }
.dockt { display: flex; justify-content: center; height: 20px; line-height: 19px; position: relative; }
.flt { position: absolute; right: 2px; top: 2px; width: 12px; height: 12px; }
.layers .dockt { padding-right: 26px; }
.ltools { display: flex; align-items: center; height: 27px; padding: 0 0 2px 3px; }
.ltools .grp { margin-left: -1px; }
.tree { border: 1px solid #565656; background: #222; margin: 2px 1px 0 0; height: 528px; padding-top: 1px; }
.row { display: flex; align-items: center; height: 24px; background: linear-gradient(#303030, #303030) 21px 0/260px 2px no-repeat; padding-right: 3px; }
.row.last { background: linear-gradient(#303030, #303030) 21px 0/260px 2px no-repeat, linear-gradient(#303030, #303030) 21px 23px/260px 1px no-repeat; }
.ex { width: 22px; color: #6c6c6c; font: 9px "DejaVu Sans", sans-serif; text-align: center; }
.eye { width: 16px; height: 12px; margin: 0 7px 0 1px; flex: none; }
.sy { width: 10px; height: 10px; margin: 0 7px 2px 0; }
.sy.ra { width: 13px; height: 13px; margin: 0 6px 0 1px; }
.ln { width: 16px; height: 1px; background: #0b07b8; margin: 0 5px 0 -1px; }
.ln.mauve { background: #8d72aa; }
.blank { width: 20px; }
.nm { font-weight: bold; flex: 1; color: #fff; }
.nm.sel { text-decoration: underline; }
.it { font-style: italic; }
.chipb { width: 21px; height: 21px; border: 1px solid #6a6a6a; border-radius: 3px; background: #505050; display: flex; align-items: center; justify-content: center; margin-right: 2px; }
.chipb svg { width: 16px; height: 14px; }
.bar2 { width: 3px; height: 16px; background: #555; }
.map { width: 505px; height: 575px; margin: 1px 7px 0 6px; display: block; flex: none; }
.lbl { font: 600 20.500px "Open Sans", sans-serif; fill: #fff; }
.style { width: 559px; padding-right: 2px; }
.style .dockt { padding-right: 24px; height: 21px; }
.style .flt { right: 0; }
.combo, .spin { display: flex; align-items: center; border: 1px solid #1f1f1f; background: linear-gradient(#565656, #494949); color: #f0f0f0; height: 23px; padding: 0 4px; flex: none; }
.combo .dn, .spin .sp, .dimspin .sp { margin-left: auto; }
.combo .dn { margin-right: -1px; }
.big { margin-left: 3px; padding-left: 6px; width: 553px; }
.pts, .sim { width: 14px; height: 14px; margin-right: 5px; }
.cols { display: flex; margin: 7px 0 0 3px; height: 499px; }
.side { width: 38px; border: 1px solid #565656; background: #222; padding: 1px; margin-right: 3px; flex: none; }
.s { height: 22px; display: flex; align-items: center; padding-left: 4px; }
.s svg { width: 16px; height: 16px; }
.s.on { background: #0014dc; padding-left: 6px; }
.s.lab { padding-left: 2px; }
.s.lab svg, .s.on svg { width: 20px; height: 20px; margin-left: -1px; }
.main { width: 512px; }
.big2 { padding-left: 5px; height: 24px; }
.sim { margin-right: 6px; }
.top { display: flex; height: 105px; margin-top: 6px; }
.prev { width: 104px; height: 104px; margin: 0 7px 0 0; }
.symtree { width: 333px; background: #222; border: 1px solid #565656; padding: 1px 3px 0 1px; }
.st { display: flex; align-items: center; height: 18px; }
.st svg { width: 14px; height: 14px; margin: 0 7px 0 2px; }
.st .ex { width: 21px; }
.st .tr1 { margin-left: 3px; margin-bottom: 2px; }
.st.sub { padding-left: 42px; }
.st strong { font-size: 11px; }
.act { background: #0014dc; }
.btns { display: grid; grid-template-columns: 28px 28px; grid-auto-rows: 25px; gap: 3px 6px; margin-left: 6px; }
.btns span { border: 1px solid #242424; display: flex; align-items: center; justify-content: center; }
.btns svg { width: 16px; height: 16px; margin-top: -2px; }
.scroll { display: flex; height: 285px; margin-top: 15px; overflow: hidden; }
.form { width: 505px; }
.sbar { width: 7px; border: 1px solid #555; border-bottom: 0; }
.sbar i { display: block; height: 139px; margin-top: 145px; background: #5a5a5a; }
.fr { display: flex; align-items: center; height: 24px; }
.fr label { width: 115px; margin-left: 10px; margin-right: -1px; }
.fr.type label { margin: 0; width: 139px; padding-left: 1px; }
.grow { width: 356px; padding-left: 3px; }
.tall, .tall .combo { height: 28px; }
.m12 { margin-top: 12px; }
.m8 { margin-top: 8px; }
.m7 { margin-top: 7px; }
.m6 { margin-top: 6px; }
.v { width: 176px; margin-right: 6px; }
.vx { width: 163px; margin-right: 6px; }
.fr em { width: 13px; }
.unit { width: 144px; height: 22px; }
.wide.combo, .wide.spin { width: 326px; }
.ovr { width: 24px; height: 18px; margin-left: 9px; }
.low { margin-top: 30px; }
.lowi { margin-top: 28px; }
.sw { width: 309px; height: 15px; border-radius: 3px; margin-left: -2px; }
.yellow { background: #ffe700; }
.check { background: conic-gradient(#fff 25%, #ccc 0 50%, #fff 0 75%, #ccc 0) 0 0/8px 8px; }
.solid { width: 32px; height: 2px; background: #000; margin: 0 6px 0 -1px; }
.bis { width: 15px; height: 15px; margin: 0 7px 0 -1px; }
.rep { display: flex; align-items: center; height: 39px; padding: 3px 0 0 0; }
.rep .ex { width: 17px; margin-right: 5px; color: #444; }
.acts { display: flex; align-items: center; height: 24px; }
.ab { width: 25px; height: 25px; margin-right: 6px; background: #505050; border: 1px solid #333; display: flex; align-items: center; justify-content: center; }
.ab svg { width: 13px; height: 13px; }
.green { width: 12px; height: 12px; background: #0f7500; flex: none; }
.acts .green { margin-left: 241px; }
.lv { margin-left: 7px; width: 124px; }
.acts button { margin-left: auto; width: 66px; height: 24px; background: #000; border: 1px solid #2c2c2c; color: #eee; font: inherit; display: flex; align-items: center; padding: 0 4px 0 6px; justify-content: space-between; }
.acts button svg { width: 10px; height: 10px; }
.tabs { display: flex; align-items: flex-end; margin-top: 3px; height: 24px; }
.tabs span { border-bottom: 1px solid #666; border-left: 1px solid #666; text-align: center; height: 19px; line-height: 20px; }
.t1 { width: 105px; }
.t2 { width: 214px; }
.tabs .t3 { width: 109px; height: 24px; border-right: 1px solid #666; line-height: 26px; }
footer { display: flex; align-items: center; height: 30px; padding-left: 5px; }
.search { width: 323px; height: 20px; background: #888; color: #555; display: flex; align-items: center; }
.search svg { width: 14px; height: 14px; margin: 0 9px 0 7px; }
.f1 { width: 71px; margin-left: 86px; }
.coord { width: 108px; height: 20px; background: #888; color: #111; line-height: 20px; padding-left: 6px; }
.cur { width: 16px; height: 16px; margin-left: 5px; }
.f2 { width: 39px; margin-left: 14px; }
.sc { width: 94px; height: 21px; padding-left: 5px; }
.lock { width: 14px; height: 16px; margin-left: 12px; }
.f3 { width: 72px; margin-left: 9px; margin-right: 1px; }
.am { width: 95px; height: 24px; }
.f4 { width: 58px; margin-left: 9px; }
.ro { width: 91px; height: 23px; margin-right: 7px; }
.f5 { width: 81px; margin-left: 7px; }
.gl { width: 14px; height: 14px; }
.f6 { margin-left: 3px; width: 91px; }
.bub { width: 16px; height: 16px; }
```

FILE: app.js
```js
// Toolbars: "|" and "/" are grips, "v" a drop-down arrow, ">" an overflow mark.
document.querySelectorAll('[data-icons]').forEach(bar => {
  const icon = n => `<svg class="ic"><use href="#${n}"/></svg>`;
  bar.innerHTML = bar.dataset.icons.split(' ').map(t => {
    if (t === '|') return '<i class="gr first"></i>';
    if (t === '/') return '<i class="gr"></i>';
    if (t === 'v') return '<i class="arr"><i class="dn"></i></i>';
    if (t === '>') return '<i class="more">»</i>';
    if (t[0] === '[') return `<div class="obox wide">${icon(t.slice(1, -1))}<i class="dn"></i></div>`;
    return icon(t);
  }).join('');
});

const parse = s => s.trim().split(/\s+/).map(p => p.split(',').map(Number));

// Catmull-Rom spline through the given points.
function smooth(s, closed) {
  const p = parse(s), n = p.length;
  const at = i => closed ? p[(i + n) % n] : p[Math.max(0, Math.min(n - 1, i))];
  let d = 'M' + p[0].join(' ');
  for (let i = 0; i < (closed ? n : n - 1); i++) {
    const a = at(i - 1), b = at(i), c = at(i + 1), e = at(i + 2);
    d += `C${b[0] + (c[0] - a[0]) / 6} ${b[1] + (c[1] - a[1]) / 6} ${c[0] - (e[0] - b[0]) / 6} ${c[1] - (e[1] - b[1]) / 6} ${c[0]} ${c[1]}`;
  }
  return d;
}

const basinPts = parse(`753,483 777,468 781,435 805,425 815,407 845,413 853,428 885,428 893,403 923,388 936,370 943,335 958,318 983,300 1005,310 1018,285 1043,272 1061,273 1068,285 1101,290 1110,310 1111,330 1138,323 1155,335 1165,318 1181,302 1221,302 1231,283 1239,295 1275,275 1338,265 1413,302 1421,335 1483,400 1481,435 1495,468 1478,487 1456,492 1458,550 1483,600 1485,630 1498,660 1490,693 1530,735 1530,872 1488,862 1458,843 1408,850 1383,825 1335,825 1323,818 1293,832 1290,878 1258,881 1236,898 1216,873 1193,881 1166,876 1158,916 1163,946 1158,966 1143,971 1138,1001 1115,1029 1093,1024 1068,1046 1065,1076 1041,1096 958,1123 958,1146 893,1156 818,1168 815,1191 798,1211 788,1236 750,1231 700,1273 675,1256 662,1291 657,1318 610,1324 590,1341 557,1348 548,1381 532,1401 528,1419 495,1448 480,1433 437,1431 350,1468 335,1461 320,1426 280,1419 250,1408 225,1414 165,1356 150,1359 130,1381 108,1383 122,1361 125,1321 122,1294 158,1261 162,1239 195,1206 232,1123 290,1114 300,1096 290,1073 255,1036 267,1011 258,981 257,931 265,878 290,878 295,865 315,797 345,765 385,767 425,750 432,710 450,675 495,668 550,655 575,625 597,618 637,643 660,618 680,625 690,607 730,565 733,530 745,485`);
// Small kinks keep the divide irregular between surveyed vertices.
const rough = [];
basinPts.forEach((a, i) => {
  const b = basinPts[(i + 1) % basinPts.length];
  rough.push(a);
  const dx = b[0] - a[0], dy = b[1] - a[1], len = Math.hypot(dx, dy), k = Math.floor(len / 12);
  for (let j = 1; j < k; j++) {
    const o = ((i * 7 + j * 3) % 5 - 2) * 1.4;
    rough.push([a[0] + dx * j / k - dy / len * o, a[1] + dy * j / k + dx / len * o]);
  }
});
const basin = 'M' + rough.map(p => p.map(v => v.toFixed(1)).join(' ')).join('L') + 'Z';
['basinpath', 'basinline', 'basinshadow'].forEach(id => document.getElementById(id).setAttribute('d', basin));

const c300 = '753,672 783,688 823,677 863,657 933,650 985,675 1001,735 983,780 943,815 893,840 838,861 793,911 771,981 793,1051 853,1083 913,1093 983,1146';
const area = (pts, tail, fill) => `<path d="${smooth(pts)}L${parse(tail).map(p => p.join(' ')).join('L')}Z" fill="${fill}"/>`;
const disc = (x, y, r, fill, ry) => `<ellipse cx="${x}" cy="${y}" rx="${r}" ry="${ry || r}" fill="${fill}"/>`;
document.getElementById('bands').innerHTML =
  '<rect width="1530" height="1725" fill="#deebf7"/>' +
  area('90,1390 135,1331 215,1211 330,1096 420,1086 500,1111 550,1146 620,1128 680,1145 705,1190 700,1235 670,1265 600,1276 560,1310 540,1350 530,1440', '500,1500 90,1500', '#f7fbff') +
  disc(235, 868, 88, '#f7fbff', 105) + disc(481, 812, 45, '#f7fbff') +
  area('420,708 500,712 555,745 588,800 590,866 560,892 500,906 420,921 393,961 400,1006 450,1041 540,1066 600,1091 680,1096 740,1151 790,1240', '1600,1240 1600,0 420,0', '#c8ddf0') +
  area('485,655 540,690 590,750 608,810 607,870 610,925 640,991 700,1061 765,1136 820,1195', '1600,1195 1600,0 485,0', '#a3cae1') +
  area('640,560 687,607 720,625 ' + c300, '1600,1146 1600,0 640,0', '#72b1d7') +
  disc(915, 720, 38, '#c8ddf0') + disc(915, 720, 25, '#deebf7') +
  area('828,400 848,450 845,510 873,560 918,587 1003,573 1063,600 1113,640 1138,720 1128,800 1138,870 1148,911 1165,951', '1600,951 1600,0 828,0', '#4996c9') +
  area('1075,270 1070,310 1050,350 1033,410 1038,470 1063,510 1133,530 1193,535 1233,560 1241,620 1223,680 1203,740 1208,790 1233,840 1290,885 1300,920', '1600,920 1600,0 1075,0', '#2879b9') +
  disc(1106, 450, 50, '#0d57a1') + disc(1310, 765, 71, '#0d57a1', 70) + disc(1222, 288, 80, '#0d57a1', 62) +
  area('1421,330 1403,400 1353,450 1313,500 1301,560 1323,600 1373,628 1433,620 1500,600', '1600,600 1600,330', '#0d57a1') +
  area('1530,740 1493,800 1478,840 1470,880', '1600,880 1600,740', '#0d57a1') +
  disc(1377, 540, 42, '#08306b') + disc(1297, 771, 47, '#08306b') + disc(1500, 440, 48, '#08306b', 60);

const open = [
  '240,64 290,78 400,77 470,97 515,145 532,210 520,265 493,325 505,370 545,410 570,450 570,500 545,560 540,620 560,670 610,740 650,810 658,850 668,911 690,981 753,1081 808,1126 898,1153 948,1196 983,1261 1053,1316 1088,1381 1088,1461 1043,1561 1009,1667',
  '500,64 535,140 555,210 563,310 590,400 620,510 640,555 680,595 720,625 ' + c300 + ' 1053,1231 1123,1331 1145,1421 1138,1521 1100,1667',
  '559,64 560,160 600,270 622,330 628,410 660,480 720,535 757,558 813,600 863,620 943,625 1003,650 1038,700 1048,745 1038,800 1008,863 968,906 938,961 943,1021 973,1061 1043,1101 1088,1161 1153,1291 1203,1411 1211,1501 1184,1667',
  '646,64 600,95 582,140 590,185 630,225 680,245 700,300 690,340 665,375 663,420 690,460 730,473 765,468 803,465 823,495 838,545 873,585 923,597 993,588 1043,610 1088,660 1108,720 1118,800 1128,868 1153,961 1160,1061 1165,1151 1203,1261 1283,1411 1310,1511 1273,1611 1265,1667',
  '887,64 858,125 803,155 763,200 761,255 793,300 843,307 933,277 978,305 991,370 998,450 1043,520 1123,570 1173,610 1181,680 1178,760 1193,830 1236,896 1268,936 1273,981 1228,1071 1220,1151 1253,1241 1333,1361 1443,1461 1513,1621',
  '1147,64 1158,110 1191,168 1153,225 1136,270 1138,310 1163,350 1213,370 1273,360 1328,320 1353,325 1353,365 1318,440 1290,500 1293,560 1328,630 1363,663 1443,662 1488,660 1515,670',
  '1513,750 1478,830 1475,868 1475,921 1485,1041 1468,1078 1413,1086 1343,1076 1283,1101 1270,1161 1313,1226 1353,1301 1433,1346 1515,1336',
  '43,353 120,290 200,272 290,285 350,330 385,420 392,500 397,570 430,650 480,690 550,735 588,800 585,861 565,941 585,1001 640,1046 710,1091 753,1151 783,1241 833,1331 893,1389 943,1361 993,1353 1038,1391 1038,1451 993,1483 938,1496 925,1531 923,1667',
  '545,1667 520,1641 480,1626 400,1633 310,1639 220,1621 130,1561 75,1471 65,1381 90,1271 155,1161 173,1096 140,1031 75,951 48,861 60,800 95,720 110,610 132,545 121,460 145,390 200,350 260,350 315,390 332,440 322,500 297,550 298,590 318,650 318,720 340,775 375,802 420,765 470,745 520,765 545,810 530,861 490,886 440,886 395,874 375,901 352,981 360,1011 430,1041 545,1096 640,1104 700,1131 723,1191 710,1251 697,1291 715,1326 753,1364 788,1421 808,1501 853,1591 859,1667',
  '673,1667 665,1611 690,1575 735,1558 780,1572 808,1620 802,1667'
];
const closed = ['410,1118 450,1123 500,1156 522,1211 505,1271 455,1341 447,1421 400,1501 310,1533 220,1501 178,1431 180,1351 230,1281 290,1241 330,1161 370,1126'];
const rings = [[240,445,53],[499,468,33],[455,204,36],[436,208,75],[427,1210,42],[642,1188,47],[310,1396,70],[678,1452,65],[219,868,78],[1425,1241,44],[1019,991,22],[1115,443,57],[910,725,58],[913,723,24],[1316,757,89],[636,155,16],[1485,88,16],[908,535,20],[485,808,16]];
document.getElementById('contours').innerHTML =
  open.map(s => `<path d="${smooth(s)}"/>`).join('') + closed.map(s => `<path d="${smooth(s, true)}"/>`).join('') +
  rings.map(r => `<circle cx="${r[0]}" cy="${r[1]}" r="${r[2]}"/>`).join('');

const labels = [
  [200,'M395 145Q428 124 468 137'],[100,'M200 403Q235 381 272 403'],[150,'M295 570L320 638'],[100,'M174 801Q210 783 248 797'],
  [250,'M656 830L670 903'],[200,'M595 1009L656 1053'],[100,'M371 1125Q408 1112 446 1123'],[50,'M396 1174Q425 1157 454 1174'],
  [100,'M604 1159Q640 1136 676 1157'],[50,'M280 1334Q310 1321 341 1334'],[100,'M637 1395Q675 1375 713 1391'],[100,'M700 1567Q738 1549 774 1569'],
  [550,'M1388 1213Q1422 1184 1458 1203'],[500,'M1075 398Q1113 378 1150 396'],[500,'M1269 358L1331 321'],[250,'M869 683Q906 667 944 683'],
  [350,'M1026 834L1047 766'],[400,'M1108 730L1119 802'],[450,'M1174 778L1180 705'],[500,'M1279 688Q1315 677 1352 671'],[300,'M850 853L922 833']
];
document.getElementById('labels').innerHTML = labels.map(([v, d], i) =>
  `<path id="lp${i}" d="${d}" fill="none" stroke="#0202ee" stroke-width="30" stroke-linecap="round"/><text class="lbl" dy="7" text-anchor="middle"><textPath href="#lp${i}" startOffset="50%">${v} mm</textPath></text>`).join('');

const stations = '45,117 459,203 636,156 716,410 503,467 242,443 230,648 672,665 485,809 225,863 429,1205 648,1184 312,1394 684,1442 743,1631 1230,62 1485,89 990,125 821,236 1208,285 1107,449 1374,542 908,536 915,722 1293,770 840,1014 1017,992 1323,1146 1422,1239 873,1227 990,1412 1359,1664';
document.getElementById('stations').innerHTML = parse(stations).map(([x, y]) =>
  `<path d="M${x} ${y - 23}L${x + 20} ${y + 14}H${x - 20}Z" fill="#ffe700"/><circle cx="${x}" cy="${y}" r="9" fill="#05070a"/>`).join('') + '<circle cx="1518" cy="773" r="12" fill="#05070a"/>';
```
